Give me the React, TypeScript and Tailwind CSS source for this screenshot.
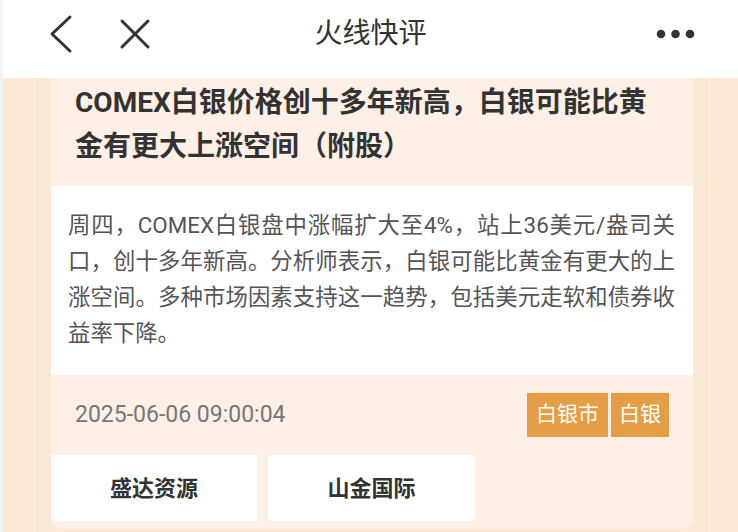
import React from "react";

const font = { fontFamily: 'Roboto, "Noto Sans CJK SC", sans-serif' };

export default function App() {
  return (
    <div className="flex h-[532px] w-[738px] overflow-hidden bg-white" style={font}>
      <div className="w-[3px] shrink-0 bg-[#f3f3f3]" />
      <div className="flex flex-1 flex-col">
        {/* Header */}
        <div className="grid h-[78px] shrink-0 grid-cols-[1fr_auto_1fr] items-center bg-white pb-[10px]">
          <div className="flex items-center pl-[46px]">
            <svg width="24" height="40" viewBox="0 0 24 40" fill="none">
              <polyline points="21,3 3,20 21,37" stroke="#333" strokeWidth="3" strokeLinecap="round" strokeLinejoin="round" />
            </svg>
            <svg className="ml-[46px]" width="32" height="32" viewBox="0 0 32 32" fill="none">
              <line x1="3" y1="3" x2="29" y2="29" stroke="#333" strokeWidth="3" strokeLinecap="round" />
              <line x1="29" y1="3" x2="3" y2="29" stroke="#333" strokeWidth="3" strokeLinecap="round" />
            </svg>
          </div>
          <div className="text-[28px] leading-none text-[#333]">火线快评</div>
          <div className="flex justify-end pr-[40px]">
            <svg width="44" height="12" viewBox="0 0 44 12">
              <circle cx="7" cy="6" r="4.3" fill="#333" />
              <circle cx="21.5" cy="6" r="4.3" fill="#333" />
              <circle cx="36" cy="6" r="4.3" fill="#333" />
            </svg>
          </div>
        </div>

        {/* Body area */}
        <div className="flex flex-1 bg-[#fbe8d5]">
          <div className="w-[31px] shrink-0" />
          <div className="w-px shrink-0 bg-[#fdf4ec]" />
          <div className="w-[16px] shrink-0" />
          <div className="flex h-[451px] w-[642px] shrink-0 flex-col overflow-hidden rounded-b-[12px] bg-[#fef0e6]">
            <div className="h-[108px] shrink-0 px-[24px] pt-[3px] text-[28px] font-bold leading-[44px] text-[#333]">
              COMEX白银价格创十多年新高，白银可能比黄金有更大上涨空间（附股）
            </div>
            <div className="h-[189px] shrink-0 bg-white pl-[17px] pr-[18px] pt-[21px] text-justify text-[22.4px] leading-[36px] text-[#555]">
              周四，COMEX白银盘中涨幅扩大至4%，站上36美元/盎司关口，创十多年新高。分析师表示，白银可能比黄金有更大的上涨空间。多种市场因素支持这一趋势，包括美元走软和债券收益率下降。
            </div>
            <div className="flex h-[80px] shrink-0 items-center justify-between px-[24px]">
              <span className="text-[23px] text-[#777]">2025-06-06 09:00:04</span>
              <div className="flex gap-[3px]">
                <span className="flex h-[44px] w-[81px] items-center justify-center bg-[#e59e45] text-[21px] text-white">白银市</span>
                <span className="flex h-[44px] w-[58px] items-center justify-center bg-[#e59e45] text-[21px] text-white">白银</span>
              </div>
            </div>
            <div className="flex h-[66px] shrink-0 gap-[11px]">
              <div className="flex w-[206px] items-center justify-center bg-white text-[22px] font-bold text-[#333]">盛达资源</div>
              <div className="flex w-[207px] items-center justify-center bg-white text-[22px] font-bold text-[#333]">山金国际</div>
            </div>
          </div>
          <div className="w-[16px] shrink-0" />
          <div className="w-px shrink-0 bg-[#fdf4ec]" />
          <div className="flex-1" />
        </div>
      </div>
    </div>
  );
}
